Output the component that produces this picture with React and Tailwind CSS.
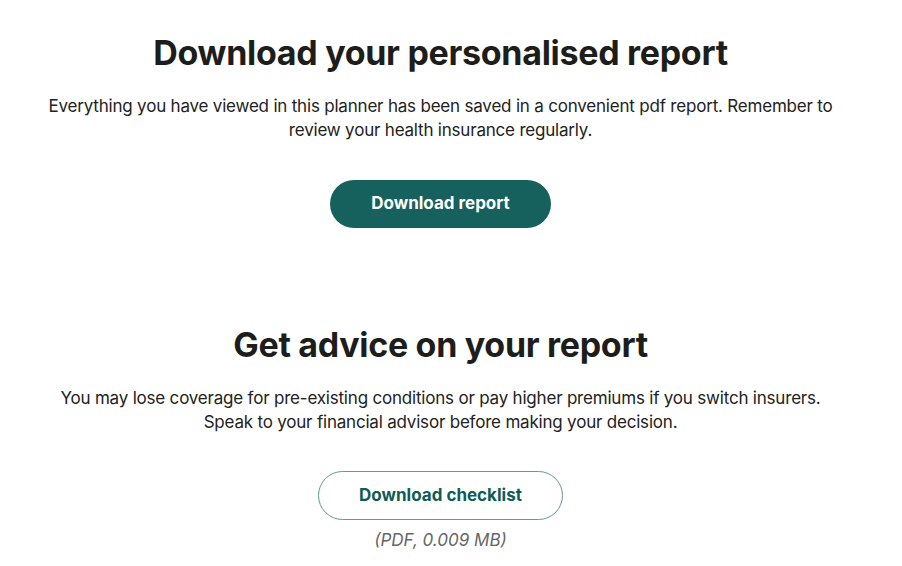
export default function App() {
  return (
    <div className="w-[902px] h-[566px] bg-white overflow-hidden">
      <div className="w-[881px] flex flex-col items-center text-center text-[#1d1d1b]" style={{ fontFamily: "Inter, 'Noto Sans', sans-serif" }}>
        <h1 className="mt-[30px] text-[34px] leading-[46px] font-bold tracking-[-0.3px]">Download your personalised report</h1>
        <p className="mt-[18px] text-[17px] leading-[24px] tracking-[-0.2px] text-[#222]">Everything you have viewed in this planner has been saved in a convenient pdf report. Remember to<br />review your health insurance regularly.</p>
        <button className="mt-[38px] w-[221px] h-[48px] rounded-full bg-[#16605d] text-white text-[17px] font-bold">Download report</button>
        <h2 className="mt-[94px] text-[34px] leading-[46px] font-bold tracking-[-0.3px]">Get advice on your report</h2>
        <p className="mt-[18px] text-[17px] leading-[24px] tracking-[-0.2px] text-[#222]">You may lose coverage for pre-existing conditions or pay higher premiums if you switch insurers.<br />Speak to your financial advisor before making your decision.</p>
        <button className="mt-[37px] w-[245px] h-[49px] rounded-full border border-[#5f9a95] bg-white text-[#0f5c55] text-[17px] font-bold">Download checklist</button>
        <p className="mt-[8px] text-[17px] leading-[24px] italic text-[#666]">(PDF, 0.009 MB)</p>
      </div>
    </div>
  );
}
